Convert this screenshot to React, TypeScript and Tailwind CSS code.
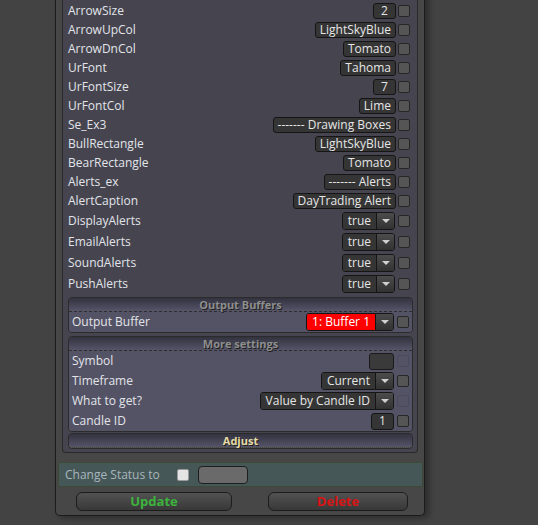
import React from "react";

type Row = { label: string; value: string };

const mainRows: Row[] = [
  { label: "ArrowSize", value: "2" },
  { label: "ArrowUpCol", value: "LightSkyBlue" },
  { label: "ArrowDnCol", value: "Tomato" },
  { label: "UrFont", value: "Tahoma" },
  { label: "UrFontSize", value: "7" },
  { label: "UrFontCol", value: "Lime" },
  { label: "Se_Ex3", value: "------- Drawing Boxes" },
  { label: "BullRectangle", value: "LightSkyBlue" },
  { label: "BearRectangle", value: "Tomato" },
  { label: "Alerts_ex", value: "------- Alerts" },
  { label: "AlertCaption", value: "DayTrading Alert" },
];

const alertRows = ["DisplayAlerts", "EmailAlerts", "SoundAlerts", "PushAlerts"];

function Check({ faint }: { faint?: boolean }) {
  return (
    <div
      className={
        faint
          ? "w-[12px] h-[12px] shrink-0 rounded-[2px] border border-[#4a4a5c]"
          : "w-[12px] h-[12px] shrink-0 rounded-[2px] border border-[#262626] bg-[#555555]"
      }
    />
  );
}

function TextBox({ value, h = "h-[16px]" }: { value: string; h?: string }) {
  return (
    <div
      className={`${h} min-w-[23px] px-[4px] flex items-center justify-center rounded-[3px] border border-[#151515] bg-[#353535] text-[#e6e6e6] leading-none`}
    >
      {value}
    </div>
  );
}

function Select({ value, red }: { value: string; red?: boolean }) {
  return (
    <div className="h-[18px] flex rounded-[3px] border border-[#151515] overflow-hidden">
      <div
        className={
          red
            ? "px-[5px] flex items-center bg-[#ff0000] text-white leading-none"
            : "px-[5px] flex items-center bg-[#353535] text-[#e6e6e6] leading-none"
        }
      >
        {value}
      </div>
      <div className="w-[18px] flex items-center justify-center border-l border-[#151515] bg-gradient-to-b from-[#4c4c4c] to-[#323232]">
        <div className="w-0 h-0 border-l-[4px] border-r-[4px] border-t-[4px] border-l-transparent border-r-transparent border-t-[#d0d0d0]" />
      </div>
    </div>
  );
}

function GroupHeader({ title, accent }: { title: string; accent?: boolean }) {
  return (
    <div
      className={`h-[13px] flex items-center justify-center bg-gradient-to-b from-[#33323f] to-[#565569] text-[11px] font-bold leading-none [text-shadow:1px_1px_0_#1e1e1e] ${
        accent ? "text-[#e6dca6]" : "text-[#8e8e8e]"
      }`}
    >
      {title}
    </div>
  );
}

export default function App() {
  return (
    <div
      className="h-[525px] w-[538px] overflow-hidden bg-[#434343] text-[12px]"
      style={{ fontFamily: '"Open Sans", "Noto Sans", sans-serif' }}
    >
      <div className="ml-[55px] -mt-[18px] w-[370px] flex flex-col border border-t-0 border-[#1c1c1c] rounded-b-[5px] bg-[#474747] pb-[4px] shadow-[4px_2px_6px_rgba(0,0,0,0.35)]">
        {/* settings area */}
        <div className="mx-[6px] border border-t-0 border-[#2a2a2a] rounded-b-[4px] bg-[#46454f] pl-[5px] pr-[7px] pb-[3px]">
          {/* row scrolled above the top edge */}
          <div className="h-[19px] flex items-center justify-end">
            <div className="w-[37px] h-[16px] rounded-[3px] border border-[#151515] bg-[#353535]" />
            <div className="ml-[2px]">
              <Check />
            </div>
          </div>
          {mainRows.map((r) => (
            <div key={r.label} className="h-[19px] flex items-center text-[#e2e4ea]">
              <span className="flex-1">{r.label}</span>
              <TextBox value={r.value} />
              <div className="ml-[2px]">
                <Check />
              </div>
            </div>
          ))}
          {alertRows.map((l) => (
            <div key={l} className="h-[21px] flex items-center text-[#e2e4ea]">
              <span className="flex-1">{l}</span>
              <Select value="true" />
              <div className="ml-[3px]">
                <Check />
              </div>
            </div>
          ))}

          {/* Output Buffers */}
          <div className="mt-[3px] -mr-[3px] rounded-[4px] border border-[#2b2b2b] overflow-hidden">
            <GroupHeader title="Output Buffers" />
            <div className="border-t border-dashed border-[#2e2e2e] bg-[#545365] h-[21px] flex items-center pl-[3px] pr-[3px] text-[#e2e4ea]">
              <span className="flex-1">Output Buffer</span>
              <Select value="1: Buffer 1" red />
              <div className="ml-[3px]">
                <Check />
              </div>
            </div>
          </div>

          {/* More settings */}
          <div className="mt-[3px] -mr-[3px] rounded-[4px] border border-[#2b2b2b] overflow-hidden">
            <GroupHeader title="More settings" />
            <div className="border-t border-dashed border-[#2e2e2e] bg-[#545365] pl-[3px] pr-[3px] text-[#e2e4ea]">
              <div className="h-[20px] flex items-center">
                <span className="flex-1">Symbol</span>
                <div className="w-[25px] h-[17px] rounded-[3px] border border-[#1a1a1a] bg-[#3a3a3a]" />
                <div className="ml-[3px]">
                  <Check faint />
                </div>
              </div>
              <div className="h-[20px] flex items-center">
                <span className="flex-1">Timeframe</span>
                <Select value="Current" />
                <div className="ml-[3px]">
                  <Check />
                </div>
              </div>
              <div className="h-[20px] flex items-center">
                <span className="flex-1">What to get?</span>
                <Select value="Value by Candle ID" />
                <div className="ml-[3px]">
                  <Check faint />
                </div>
              </div>
              <div className="h-[20px] flex items-center">
                <span className="flex-1">Candle ID</span>
                <TextBox value="1" h="h-[17px]" />
                <div className="ml-[3px]">
                  <Check />
                </div>
              </div>
            </div>
          </div>

          {/* Adjust */}
          <div className="mt-[1px] -mr-[3px] rounded-[4px] border border-[#2b2b2b] overflow-hidden">
            <GroupHeader title="Adjust" accent />
            <div className="border-t border-dotted border-[#5a5a4a]" />
          </div>
        </div>

        {/* status strip */}
        <div className="mt-[9px] ml-[2px] mr-[1px] h-[25px] flex items-center border border-[#3d4a38] bg-[#465757] pl-[6px]">
          <span className="text-[12px] text-[#a6b6bd]">Change Status to</span>
          <div className="ml-[17px] w-[12px] h-[12px] rounded-[2px] border border-[#9a9a9a] bg-[#e4e4e4]" />
          <div className="ml-[9px] w-[50px] h-[18px] rounded-[4px] border border-[#1e1e1e] bg-[#6a6a6a]" />
        </div>

        {/* buttons */}
        <div className="mt-[5px] flex pl-[20px] gap-[36px]">
          <div className="w-[156px] h-[19px] flex items-center justify-center rounded-[6px] border border-[#1c1c1c] bg-gradient-to-b from-[#525252] to-[#383838] text-[13px] font-bold text-[#3cb43c] leading-none">
            Update
          </div>
          <div className="w-[140px] h-[19px] flex items-center justify-center rounded-[6px] border border-[#1c1c1c] bg-gradient-to-b from-[#525252] to-[#383838] text-[13px] font-bold text-[#d81414] leading-none">
            Delete
          </div>
        </div>
      </div>
    </div>
  );
}
